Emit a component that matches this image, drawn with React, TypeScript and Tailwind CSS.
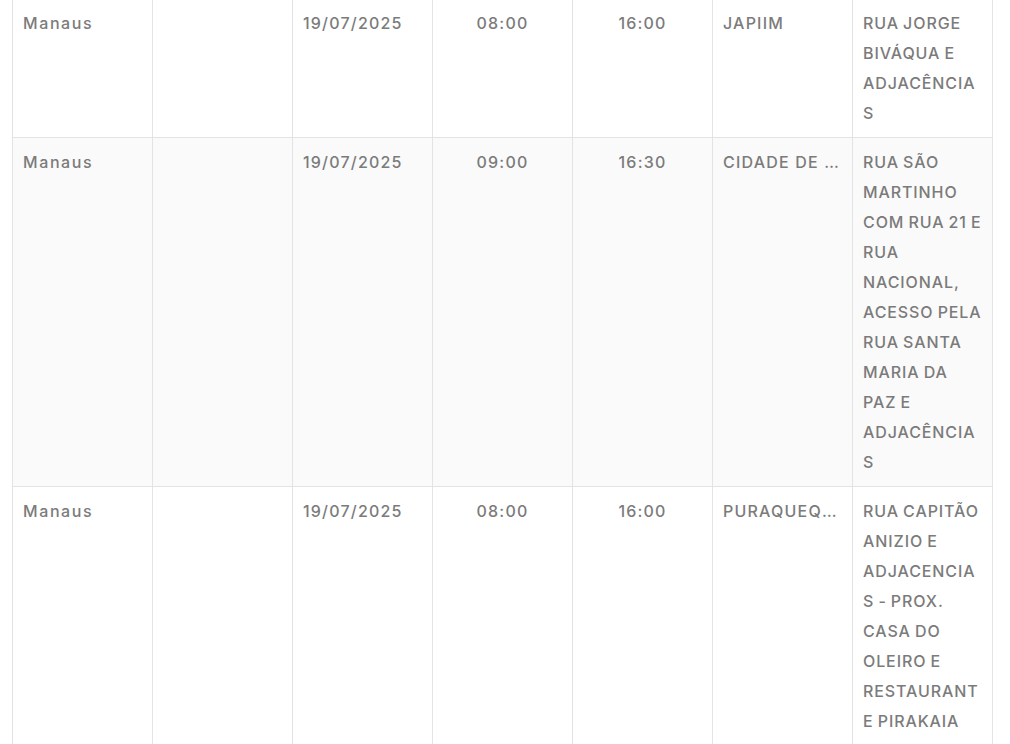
const rows = [
  {
    city: "Manaus",
    extra: "",
    date: "19/07/2025",
    start: "08:00",
    end: "16:00",
    area: "JAPIIM",
    street: "RUA JORGE BIVÁQUA E ADJACÊNCIAS",
  },
  {
    city: "Manaus",
    extra: "",
    date: "19/07/2025",
    start: "09:00",
    end: "16:30",
    area: "CIDADE DE DEUS",
    street:
      "RUA SÃO MARTINHO COM RUA 21 E RUA NACIONAL, ACESSO PELA RUA SANTA MARIA DA PAZ E ADJACÊNCIAS",
  },
  {
    city: "Manaus",
    extra: "",
    date: "19/07/2025",
    start: "08:00",
    end: "16:00",
    area: "PURAQUEQUARA",
    street:
      "RUA CAPITÃO ANIZIO E ADJACENCIAS - PROX. CASA DO OLEIRO E RESTAURANTE PIRAKAIA",
  },
];

const cell = "w-[140px] border border-[#e3e3e3] px-[10px] py-[9px] align-top";

export default function App() {
  return (
    <div className="min-h-screen bg-white px-3 font-['Inter',sans-serif] text-[16px] font-medium leading-[30px] tracking-[1.2px] text-[#7b7b7b]">
      <table className="-mt-[2px] w-[981px] table-fixed border-collapse">
        <tbody>
          {rows.map((r, i) => (
            <tr key={i} className={i % 2 === 1 ? "bg-[#fafafa]" : "bg-white"}>
              <td className={`${cell} tracking-[1.6px]`}>{r.city}</td>
              <td className={cell}>{r.extra}</td>
              <td className={cell}>{r.date}</td>
              <td className={`${cell} text-center`}>{r.start}</td>
              <td className={`${cell} text-center`}>{r.end}</td>
              <td className={cell}>
                <div className="truncate">{r.area}</div>
              </td>
              <td className={`${cell} break-words tracking-[0.9px] [word-spacing:-1px]`}>{r.street}</td>
            </tr>
          ))}
        </tbody>
      </table>
    </div>
  );
}
